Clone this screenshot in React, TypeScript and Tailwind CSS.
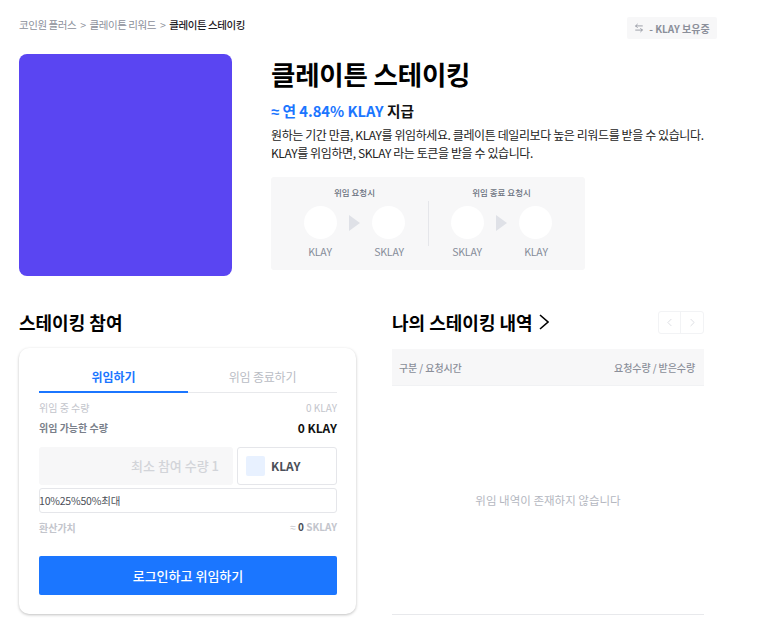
import { ArrowLeftRight, ChevronLeft, ChevronRight } from 'lucide-react';

const FONT = "font-['Noto_Sans_CJK_KR','Noto_Sans',sans-serif]";

const FlowStep = ({ title, from, to, className }: { title: string; from: string; to: string; className: string }) => (
  <div className={`flex flex-col items-center ${className}`}>
    <p className="text-[8.5px] leading-[14px] font-medium text-[#6b7280]">{title}</p>
    <div className="mt-[7px] flex items-center gap-[12px]">
      <div className="h-[33px] w-[33px] rounded-full bg-white" />
      <div className="h-0 w-0 border-y-[8px] border-l-[11px] border-y-transparent border-l-[#dfe1e7]" />
      <div className="h-[33px] w-[33px] rounded-full bg-white" />
    </div>
    <div className="mt-[5px] flex w-[102px] justify-between text-[10.5px] leading-[16px] tracking-[-0.2px] text-[#868c99]">
      <span className="w-[33px] text-center">{from}</span>
      <span className="w-[33px] text-center">{to}</span>
    </div>
  </div>
);

export default function App() {
  return (
    <div className={`${FONT} h-[630px] w-[773px] overflow-hidden bg-white px-[19px] text-black`}>
      <div className="flex h-[54px] items-start justify-between pr-[37px]">
        <div className="mt-[17px] flex items-center gap-[4px] text-[10.5px] leading-[16px] tracking-[-0.45px] text-[#8b8f9a]">
          <span>코인원 플러스</span>
          <span>&gt;</span>
          <span>클레이튼 리워드</span>
          <span>&gt;</span>
          <span className="font-medium text-[#1f2026]">클레이튼 스테이킹</span>
        </div>
        <div className="mt-[17px] flex h-[22px] w-[90px] items-center justify-center gap-[5px] rounded-[2px] bg-[#f7f7f8] text-[10px] font-bold text-[#8b8f9a]">
          <ArrowLeftRight className="h-[10px] w-[10px]" strokeWidth={2} />
          <span>- KLAY 보유중</span>
        </div>
      </div>

      <div className="flex items-start gap-[39px]">
        <div className="h-[222px] w-[213px] rounded-[8px] bg-[#5a45f2]" />
        <div className="flex flex-col">
          <h1 className="text-[26.5px] leading-[40px] font-bold tracking-[-0.2px]">클레이튼 스테이킹</h1>
          <p className="mt-[6px] text-[14.7px] leading-[22px] font-bold text-[#1b76ff]">
            <span className="font-['Liberation_Sans',sans-serif]">≈</span> 연 4.84% KLAY <span className="text-[#111]">지급</span>
          </p>
          <p className="mt-[3px] w-[460px] text-[12px] leading-[18px] tracking-[-0.4px] text-[#222]">
            원하는 기간 만큼, KLAY를 위임하세요. 클레이튼 데일리보다 높은 리워드를 받을 수 있습니다.
            <br />
            KLAY를 위임하면, SKLAY 라는 토큰을 받을 수 있습니다.
          </p>
          <div className="mt-[15px] flex h-[93px] w-[314px] items-start rounded-[3px] bg-[#f7f7f8] pt-[8px]">
            <FlowStep title="위임 요청시" from="KLAY" to="SKLAY" className="w-[157px] pl-[10px]" />
            <div className="mt-[16px] h-[45px] w-px bg-[#e5e6ea]" />
            <FlowStep title="위임 종료 요청시" from="SKLAY" to="KLAY" className="w-[156px] pr-[11px]" />
          </div>
        </div>
      </div>

      <div className="mt-[30px] flex items-start gap-[36px]">
        <section className="w-[337px]">
          <h2 className="text-[18px] leading-[32px] font-bold">스테이킹 참여</h2>
          <div className="mt-[10px] h-[266px] rounded-[10px] bg-white pt-[9px] pr-[19px] pl-[20px] shadow-[0_1px_3px_rgba(0,0,0,0.25)]">
            <div className="flex h-[36px] border-b border-[#e8e9ec] text-[12px]">
              <div className="-mb-px w-1/2 border-b-2 border-[#1b76ff] pt-[11px] text-center leading-[18px] font-bold text-[#1b76ff]">위임하기</div>
              <div className="w-1/2 pt-[11px] text-center leading-[18px] tracking-[-0.2px] text-[#b9bcc4]">위임 종료하기</div>
            </div>
            <div className="mt-[7px] flex items-center justify-between text-[10px] leading-[16px] text-[#c3c5cc]">
              <span>위임 중 수량</span>
              <span>0 KLAY</span>
            </div>
            <div className="mt-[2px] flex items-center justify-between leading-[20px]">
              <span className="text-[10px] font-bold text-[#7a7f8a]">위임 가능한 수량</span>
              <span className="text-[12px] font-bold text-[#111]">0 KLAY</span>
            </div>
            <div className="mt-[9px] flex h-[38px] gap-[4px]">
              <div className="flex w-[194px] items-center justify-end rounded-[3px] bg-[#f7f7f8] pr-[14px] text-[13px] font-medium text-[#d2d4d9]">
                최소 참여 수량 1
              </div>
              <div className="flex flex-1 items-center gap-[6px] rounded-[3px] border border-[#e5e6ea] pl-[8px]">
                <div className="h-[20px] w-[19px] rounded-[2px] bg-[#e8f1ff]" />
                <span className="text-[12px] font-bold text-[#4b4f58]">KLAY</span>
              </div>
            </div>
            <div className="mt-[3px] flex h-[25px] items-center rounded-[3px] border border-[#e5e6ea] text-[10.5px] tracking-[-0.2px] text-[#4b4f58]">
              <span className="-ml-px">10%</span>
              <span>25%</span>
              <span>50%</span>
              <span>최대</span>
            </div>
            <div className="mt-[6px] flex items-center justify-between text-[10px] leading-[16px] font-bold text-[#c3c5cc]">
              <span>환산가치</span>
              <span>
                <span className="font-['Liberation_Sans',sans-serif] font-normal">≈</span> <span className="text-[#4b4f58]">0</span> SKLAY
              </span>
            </div>
            <button className="mt-[20px] h-[39px] w-full rounded-[2px] bg-[#1b76ff] text-[13px] font-medium text-white">
              로그인하고 위임하기
            </button>
          </div>
        </section>

        <section className="w-[312px]">
          <div className="flex h-[32px] items-center justify-between">
            <h2 className="flex items-center gap-[6px] text-[18px] leading-[32px] font-bold">
              나의 스테이킹 내역
              <svg viewBox="0 0 10 16" className="h-[16px] w-[10px]" fill="none" stroke="currentColor" strokeWidth="1.6">
                <path d="M1 1l8 7-8 7" />
              </svg>
            </h2>
            <div className="flex h-[23px] rounded-[3px] border border-[#f2f3f5] text-[#d5d7dc]">
              <div className="flex w-[22px] items-center justify-center border-r border-[#f2f3f5]">
                <ChevronLeft className="h-[13px] w-[13px]" strokeWidth={1.5} />
              </div>
              <div className="flex w-[22px] items-center justify-center">
                <ChevronRight className="h-[13px] w-[13px]" strokeWidth={1.5} />
              </div>
            </div>
          </div>
          <div className="mt-[11px] flex h-[37px] items-center justify-between border-b border-[#f1f2f4] bg-[#f7f7f8] pr-[9px] pl-[7px] text-[10px] font-medium tracking-[-0.1px] text-[#8b8f9a]">
            <span>구분 / 요청시간</span>
            <span>요청수량 / 받은수량</span>
          </div>
          <div className="flex h-[229px] items-center justify-center border-b border-[#e8e9ec] pt-[2px] text-[11.5px] text-[#b4b7bf]">
            위임 내역이 존재하지 않습니다
          </div>
        </section>
      </div>
    </div>
  );
}
